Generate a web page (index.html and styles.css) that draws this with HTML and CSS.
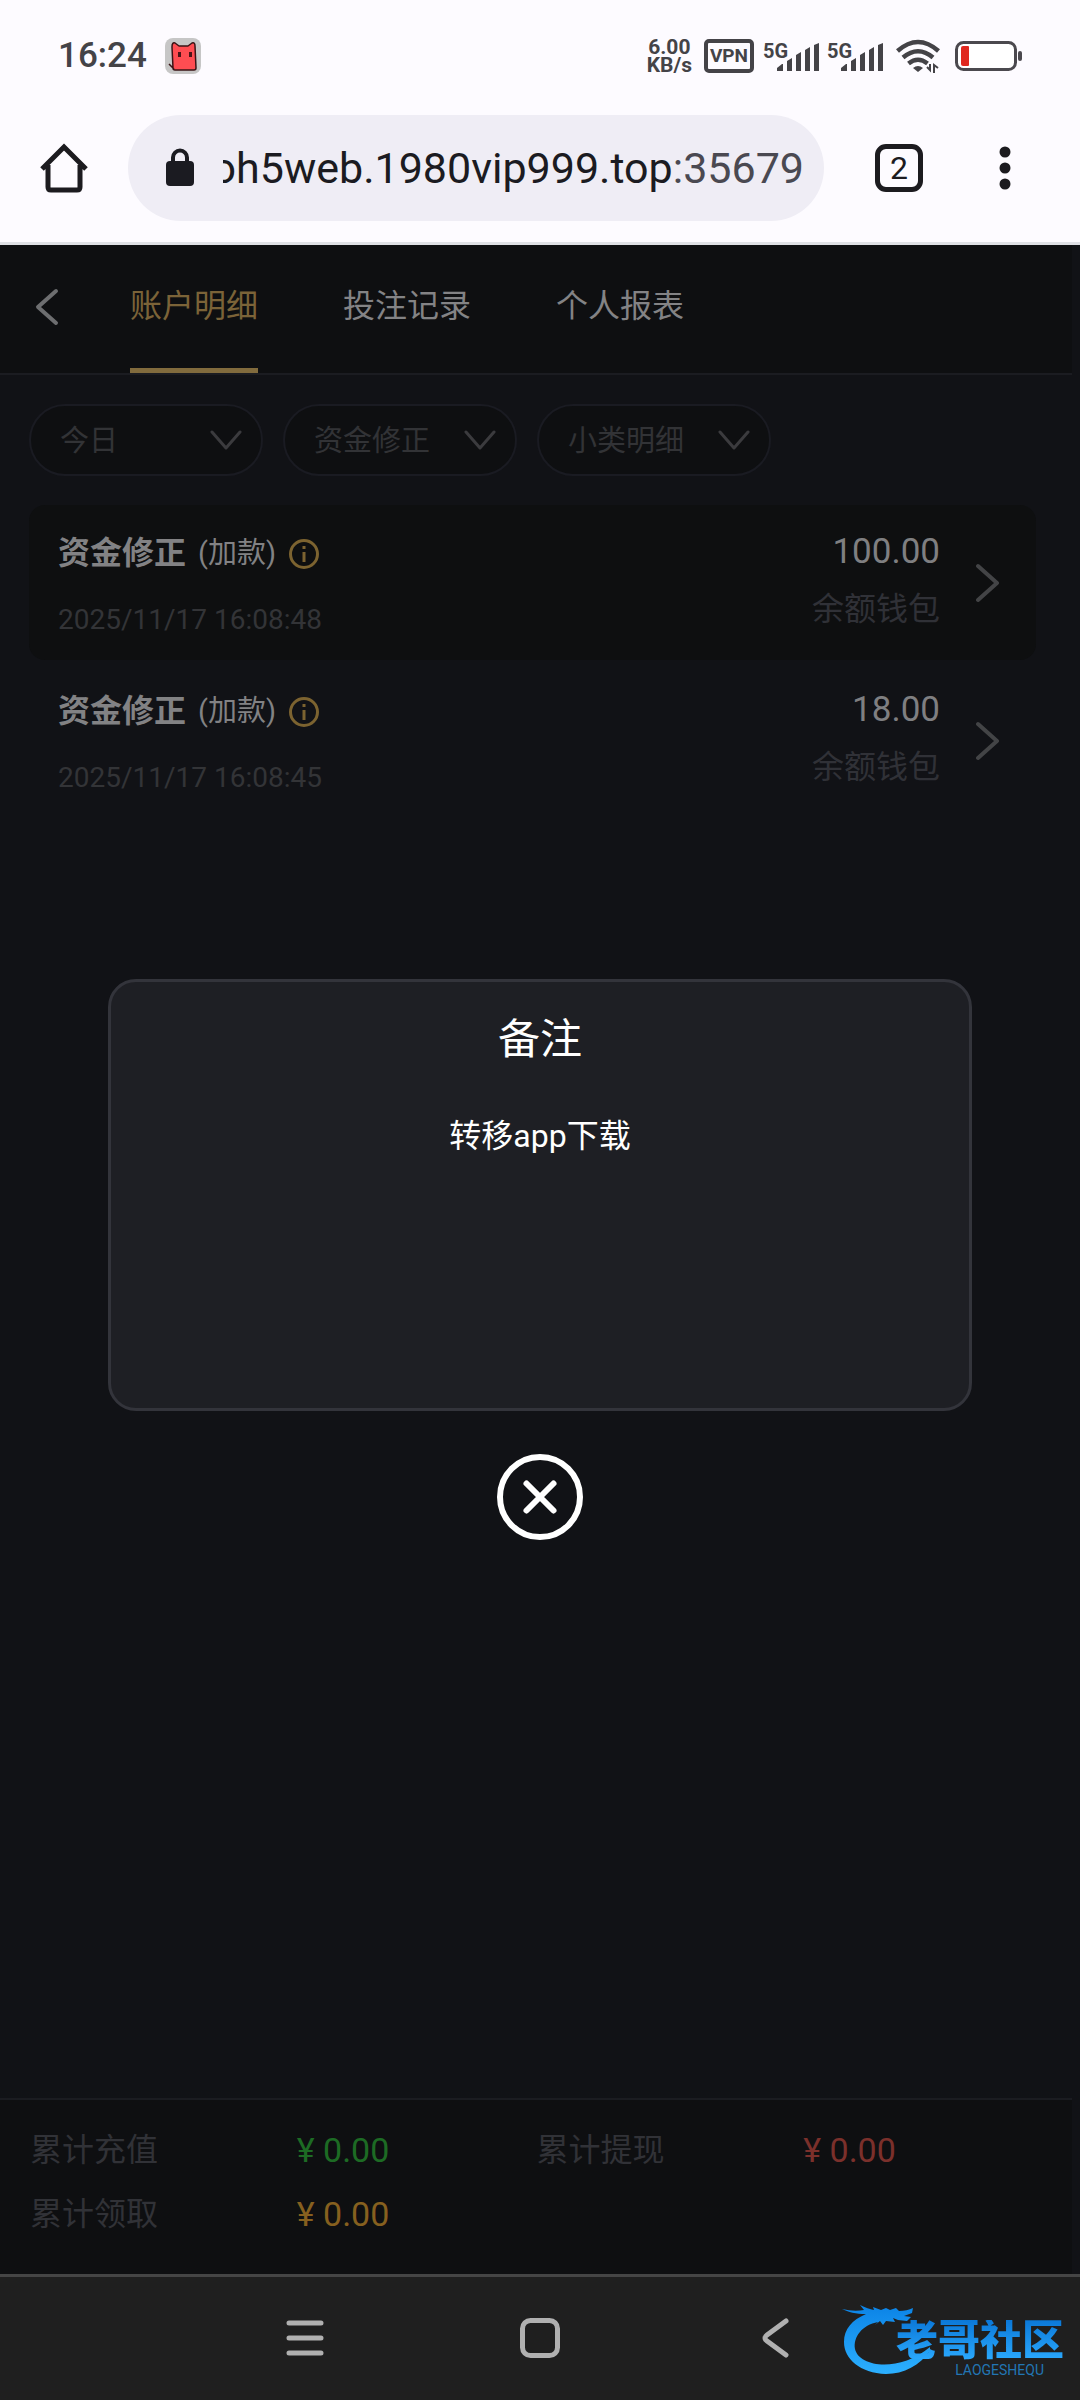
FILE: index.html
```html
<!DOCTYPE html>
<html lang="zh-CN">
<head>
<meta charset="utf-8">
<meta name="viewport" content="width=device-width">
<title>账户明细</title>
<link rel="stylesheet" href="styles.css">
</head>
<body>
<header class="chrome">
  <div class="status">
    <time class="clock">16:24</time>
    <svg class="cat" width="36" height="36" viewBox="0 0 36 36" aria-hidden="true">
      <rect width="36" height="36" rx="8" fill="#c6c6c6"/>
      <path d="M4 26l5 5M8 30L7 9q0-5 3-4l4 3h9l4-3q3-1 3 3l1 22q0 2-2 2H10q-2 0-2-2z" fill="#ff4d52" stroke="#3a1416" stroke-width="1.500" stroke-linejoin="round"/>
      <path d="M14.500 14v5M25.500 14v5" stroke="#4b1518" stroke-width="3"/>
    </svg>
    <div class="signals">
      <div class="speed"><span>6.00</span><span>KB/s</span></div>
      <div class="vpn">VPN</div>
      <div class="cell"><span>5G</span>
        <svg width="43" height="28" viewBox="0 0 43 28" fill="#444347"><path d="M0 28v-3l5-4h1v7zM10 28V18l5-3v13zM19 28V12l5-3v19zM28 28V7l5-3v24zM37 28V2l5-2v28z"/></svg>
      </div>
      <div class="cell"><span>5G</span>
        <svg width="43" height="28" viewBox="0 0 43 28" fill="#444347"><path d="M0 28v-3l5-4h1v7zM10 28V18l5-3v13zM19 28V12l5-3v19zM28 28V7l5-3v24zM37 28V2l5-2v28z"/></svg>
      </div>
      <svg class="wifi" width="44" height="34" viewBox="0 0 44 34" fill="none" stroke="#444347" stroke-width="4.500">
        <path d="M1.500 12Q22-6 42.500 12M7 18.500Q22 6 37 18.500M12.500 24.500Q22 17 31.500 24.500"/>
        <path d="M17 29q5-4 10 0l-5 4z" fill="#444347" stroke="none"/>
        <path d="M31 28l3 3V25M38 34v-8l4 3" stroke-width="2"/>
      </svg>
      <svg class="battery" width="68" height="30" viewBox="0 0 68 30">
        <rect x="1.500" y="1.500" width="59" height="27" rx="7" fill="#fff" stroke="#4b494e" stroke-width="3"/>
        <path d="M8 5h5q1 0 1 1v18q0 1-1 1H8q-2 0-2-2V7q0-2 2-2z" fill="#e0281f"/>
        <rect x="63" y="10" width="4" height="10" rx="2" fill="#4b494e"/>
      </svg>
    </div>
  </div>
  <div class="toolbar">
    <button class="icon-btn home" aria-label="Home">
      <svg width="48" height="50" viewBox="0 0 48 50" fill="none" stroke="#1c1b1f" stroke-width="5"><path d="M2 26L24 4l22 22M8 22v22q0 3 3 3h26q3 0 3-3V22"/></svg>
    </button>
    <button class="url">
      <svg width="30" height="40" viewBox="0 0 30 40"><rect x="1" y="13" width="28" height="25" rx="4" fill="#1b1b21"/><path d="M8 15V9.500a7 7 0 0 1 14 0V15" fill="none" stroke="#1b1b21" stroke-width="4"/></svg>
      <span class="address"><span>oh5web.1980vip999.top<span class="port">:35679</span></span></span>
    </button>
    <button class="icon-btn tabs-count">2</button>
    <button class="icon-btn more" aria-label="More">
      <svg width="12" height="44" viewBox="0 0 12 44" fill="#1c1b1f"><circle cx="6" cy="6" r="5.500"/><circle cx="6" cy="22" r="5.500"/><circle cx="6" cy="38" r="5.500"/></svg>
    </button>
  </div>
</header>

<main class="app">
  <nav class="topnav">
    <button class="back" aria-label="返回"><svg width="24" height="38" viewBox="0 0 24 38" fill="none" stroke="#6d6e70" stroke-width="4" stroke-linecap="round" stroke-linejoin="round"><path d="M21 3L3 19l18 16"/></svg></button>
    <div class="tabs">
      <a class="tab active" href="#account">账户明细</a>
      <a class="tab" href="#bets">投注记录</a>
      <a class="tab" href="#report">个人报表</a>
    </div>
  </nav>

  <section class="content">
    <div class="filters">
      <div class="filter"><select aria-label="日期"><option>今日</option></select><svg width="32" height="22" viewBox="0 0 32 22"><path d="M2 3l14 16L30 3"/></svg></div>
      <div class="filter"><select aria-label="类型"><option>资金修正</option></select><svg width="32" height="22" viewBox="0 0 32 22"><path d="M2 3l14 16L30 3"/></svg></div>
      <div class="filter"><select aria-label="小类"><option>小类明细</option></select><svg width="32" height="22" viewBox="0 0 32 22"><path d="M2 3l14 16L30 3"/></svg></div>
    </div>
    <ul class="records">
      <li class="record shaded">
        <div class="info">
          <div class="name"><strong>资金修正</strong><span class="kind">(加款)</span>
            <button class="tip" aria-label="备注"><svg width="32" height="32" viewBox="0 0 32 32" fill="none" stroke="#7c6330" stroke-width="3"><circle cx="16" cy="16" r="13.500"/><path d="M16 14v10M16 8v3"/></svg></button>
          </div>
          <time class="date">2025/11/17 16:08:48</time>
        </div>
        <div class="amount"><span class="sum">100.00</span><span class="wallet">余额钱包</span></div>
        <button class="go" aria-label="详情"><svg width="24" height="40" viewBox="0 0 24 40" fill="none" stroke="#434446" stroke-width="4" stroke-linecap="round" stroke-linejoin="round"><path d="M2 3l19 17L2 37"/></svg></button>
      </li>
      <li class="record">
        <div class="info">
          <div class="name"><strong>资金修正</strong><span class="kind">(加款)</span>
            <button class="tip" aria-label="备注"><svg width="32" height="32" viewBox="0 0 32 32" fill="none" stroke="#7c6330" stroke-width="3"><circle cx="16" cy="16" r="13.500"/><path d="M16 14v10M16 8v3"/></svg></button>
          </div>
          <time class="date">2025/11/17 16:08:45</time>
        </div>
        <div class="amount"><span class="sum">18.00</span><span class="wallet">余额钱包</span></div>
        <button class="go" aria-label="详情"><svg width="24" height="40" viewBox="0 0 24 40" fill="none" stroke="#434446" stroke-width="4" stroke-linecap="round" stroke-linejoin="round"><path d="M2 3l19 17L2 37"/></svg></button>
      </li>
    </ul>
  </section>

  <dl class="totals">
    <dt>累计充值</dt><dd class="green">¥ 0.00</dd>
    <dt>累计提现</dt><dd class="red">¥ 0.00</dd>
    <dt>累计领取</dt><dd class="orange">¥ 0.00</dd>
  </dl>

  <div class="overlay">
    <div class="dialog" role="dialog" aria-labelledby="note-title">
      <h2 id="note-title">备注</h2>
      <p>转移app下载</p>
    </div>
    <button class="close" aria-label="关闭"><svg width="86" height="86" viewBox="0 0 86 86" fill="none" stroke="#fff" stroke-linecap="round"><circle cx="43" cy="43" r="40" stroke-width="6"/><path d="M29.500 29.500l27 27M56.500 29.500l-27 27" stroke-width="6"/></svg></button>
  </div>
</main>

<footer class="sysnav">
  <button aria-label="Recents"><svg width="40" height="40" viewBox="0 0 40 40" stroke="#b0b0b0" stroke-width="5" stroke-linecap="round"><path d="M4 5h32M4 20h32M4 35h32"/></svg></button>
  <button aria-label="Home"><svg width="40" height="40" viewBox="0 0 40 40" fill="none" stroke="#b0b0b0" stroke-width="5"><rect x="2.500" y="2.500" width="35" height="35" rx="8"/></svg></button>
  <button aria-label="Back"><svg width="40" height="40" viewBox="0 0 40 40" fill="none" stroke="#b0b0b0" stroke-width="5" stroke-linecap="round"><path d="M31 3L12 17q-4 3 0 6l19 14"/></svg></button>
  <div class="brand">
    <svg class="dragon" width="92" height="72" viewBox="0 0 92 72" aria-hidden="true">
      <defs><linearGradient id="blue" x1="0" y1="0" x2="0" y2="1"><stop offset="0" stop-color="#0b83e6"/><stop offset="1" stop-color="#2cb0ff"/></linearGradient></defs>
      <path fill="url(#blue)" d="M36 17C20 20 11 32 13 44c4 18 44 24 75-2v4C78 60 62 69 44 69 18 68 2 54 2 37 2 24 10 15 24 9 14 9 6 7 0 4q12 3 22 1l-4-5q8 4 14 5l-1-3 8 3 5-2 4 2 6-2 3 3q8 0 14-3l-1 5-8 3 7 1-4 4-9-1-5-2 2 4-9-1-3 4-3-4-5 4z"/>
    </svg>
    <span class="brand-name">老哥社区</span>
    <span class="brand-sub">LAOGESHEQU</span>
  </div>
</footer>
</body>
</html>
```
FILE: styles.css
```css
* { box-sizing: border-box; }
body {
  margin: 0;
  min-height: 100vh;
  display: flex;
  flex-direction: column;
  background: #111216;
  font-family: Roboto, "Noto Sans CJK SC", sans-serif;
}
button {
  padding: 0;
  border: 0;
  background: none;
  color: inherit;
  font: inherit;
}
svg { display: block; flex: none; }

/* phone status bar and browser toolbar */
.chrome {
  background: #fdfbff;
  border-bottom: 3px solid #dfe0e5;
  padding-bottom: 21px;
}
.status {
  height: 115px;
  padding: 0 57px 4px 58px;
  display: flex;
  align-items: center;
  color: #444347;
}
.clock { font-size: 35px; font-weight: 500; }
.cat { margin-left: 18px; }
.signals {
  margin-left: auto;
  display: flex;
  align-items: center;
}
.speed {
  display: flex;
  flex-direction: column;
  align-items: center;
  font-size: 21px;
  line-height: 18px;
  font-weight: 700;
}
.vpn {
  margin: 0 9px 0 12px;
  width: 50px;
  height: 34px;
  border: 4px solid #444347;
  border-radius: 5px;
  font-size: 19px;
  line-height: 26px;
  font-weight: 700;
  text-align: center;
}
.cell {
  display: flex;
  align-items: flex-end;
  width: 64px;
  height: 30px;
}
.cell span {
  font-size: 20px;
  line-height: 20px;
  font-weight: 700;
  align-self: flex-start;
  width: 14px;
}
.wifi { margin: 0 15px 0 5px; }
.toolbar {
  display: flex;
  align-items: center;
  height: 106px;
  padding-left: 40px;
}
.icon-btn { flex: none; }
.url {
  flex: 1;
  min-width: 0;
  height: 106px;
  margin-left: 40px;
  padding: 0 20px 0 37px;
  border-radius: 53px;
  background: #efedf5;
  display: flex;
  align-items: center;
  gap: 28px;
}
.address {
  flex: 1;
  min-width: 0;
  overflow: hidden;
  display: flex;
  justify-content: flex-end;
  font-size: 43px;
  color: #1b1b21;
  white-space: nowrap;
}
.port { color: #4a4951; }
.tabs-count {
  width: 48px;
  height: 48px;
  margin-left: 51px;
  border: 5px solid #1c1b1f;
  border-radius: 11px;
  font-size: 32px;
  line-height: 38px;
  color: #1c1b1f;
}
.more { margin: 0 69px 0 76px; }

/* web page */
.app {
  position: relative;
  flex: 1;
  display: flex;
  flex-direction: column;
  padding-right: 8px;
}
.topnav {
  display: flex;
  height: 130px;
  padding-left: 35px;
  background: #0e0f11;
  border-bottom: 2px solid #1b1c21;
}
.back { align-self: flex-start; margin-top: 43px; }
.tabs { display: flex; gap: 85px; margin-left: 71px; }
.tab {
  height: 128px;
  padding-top: 37px;
  border-bottom: 5px solid transparent;
  font-size: 32px;
  line-height: 48px;
  color: #838385;
  text-decoration: none;
}
.tab.active { color: #7b6338; border-color: #816b3d; }
.content {
  flex: 1;
  padding: 29px 36px 0 29px;
}
.filters { display: flex; gap: 20px; }
.filter {
  display: flex;
  align-items: center;
  position: relative;
  width: 234px;
}
.filter select {
  appearance: none;
  width: 100%;
  height: 72px;
  padding: 0 60px 4px 29px;
  border: 2px solid #1a1b22;
  border-radius: 36px;
  background: #0e0f11;
  color: #323336;
  font: 29px "Noto Sans CJK SC", sans-serif;
}
.filter svg {
  position: absolute;
  right: 21px;
  fill: none;
  stroke: #3b3b3e;
  stroke-width: 3;
  stroke-linecap: round;
  stroke-linejoin: round;
  pointer-events: none;
}
.records {
  list-style: none;
  margin: 29px 0 0;
  padding: 0;
  display: flex;
  flex-direction: column;
  gap: 3px;
}
.record {
  display: flex;
  align-items: center;
  height: 155px;
  padding: 0 36px 0 29px;
  border-radius: 16px;
}
.shaded { background: #0e0f10; }
.info { flex: 1; }
.name {
  display: flex;
  align-items: center;
  height: 40px;
  color: #828284;
}
.name strong { font-size: 32px; }
.kind { font-size: 29px; margin: 0 12px; }
.tip { margin-top: 8px; }
.date {
  display: block;
  margin-top: 34px;
  font-size: 28px;
  line-height: 32px;
  color: #333437;
}
.amount {
  display: flex;
  flex-direction: column;
  align-items: flex-end;
  gap: 11px;
  margin-bottom: 4px;
}
.sum { font-size: 35px; line-height: 46px; color: #7f7f81; }
.wallet { font-size: 32px; line-height: 46px; color: #303137; }
.go { margin-left: 36px; }
.totals {
  margin: 0;
  height: 176px;
  padding: 18px 29px 0 30px;
  border-top: 2px solid #1b1c21;
  background: #0e0f11;
  display: grid;
  grid-template-columns: 267fr 240fr 267fr 240fr;
  grid-auto-rows: 64px;
  line-height: 64px;
  color: #313237;
}
.totals dt { font-size: 32px; }
.totals dd { margin: 0; font-size: 34px; }
.green { color: #1d6b24; }
.red { color: #7b302b; }
.orange { color: #86601f; }

/* note dialog over the page */
.overlay {
  position: absolute;
  inset: 0;
  display: flex;
  flex-direction: column;
  align-items: center;
  justify-content: center;
  gap: 43px;
}
.dialog {
  width: 80%;
  min-height: 432px;
  padding: 26px 24px;
  border: 3px solid #33343b;
  border-radius: 28px;
  background: #1e1f24;
  color: #fff;
  text-align: center;
}
.dialog h2 {
  margin: 0;
  font-size: 42px;
  line-height: 64px;
  font-weight: 400;
}
.dialog p {
  margin: 40px 0 0;
  font-size: 32px;
  line-height: 48px;
}

/* system navigation */
.sysnav {
  position: relative;
  height: 126px;
  padding-bottom: 2px;
  border-top: 3px solid #454545;
  background: #1f1f1f;
  display: flex;
  align-items: center;
  justify-content: center;
  gap: 195px;
}
.brand {
  position: absolute;
  right: 16px;
  top: 26px;
  width: 222px;
  height: 76px;
}
.dragon { position: absolute; left: 0; top: 2px; }
.brand-name {
  position: absolute;
  right: 0;
  top: 17px;
  font-size: 42px;
  line-height: 42px;
  font-weight: 900;
  background: linear-gradient(#0b78d8, #2cabff);
  background-clip: text;
  color: transparent;
}
.brand-sub {
  position: absolute;
  right: 20px;
  top: 60px;
  font-size: 14px;
  line-height: 14px;
  color: #2276b4;
}
```
